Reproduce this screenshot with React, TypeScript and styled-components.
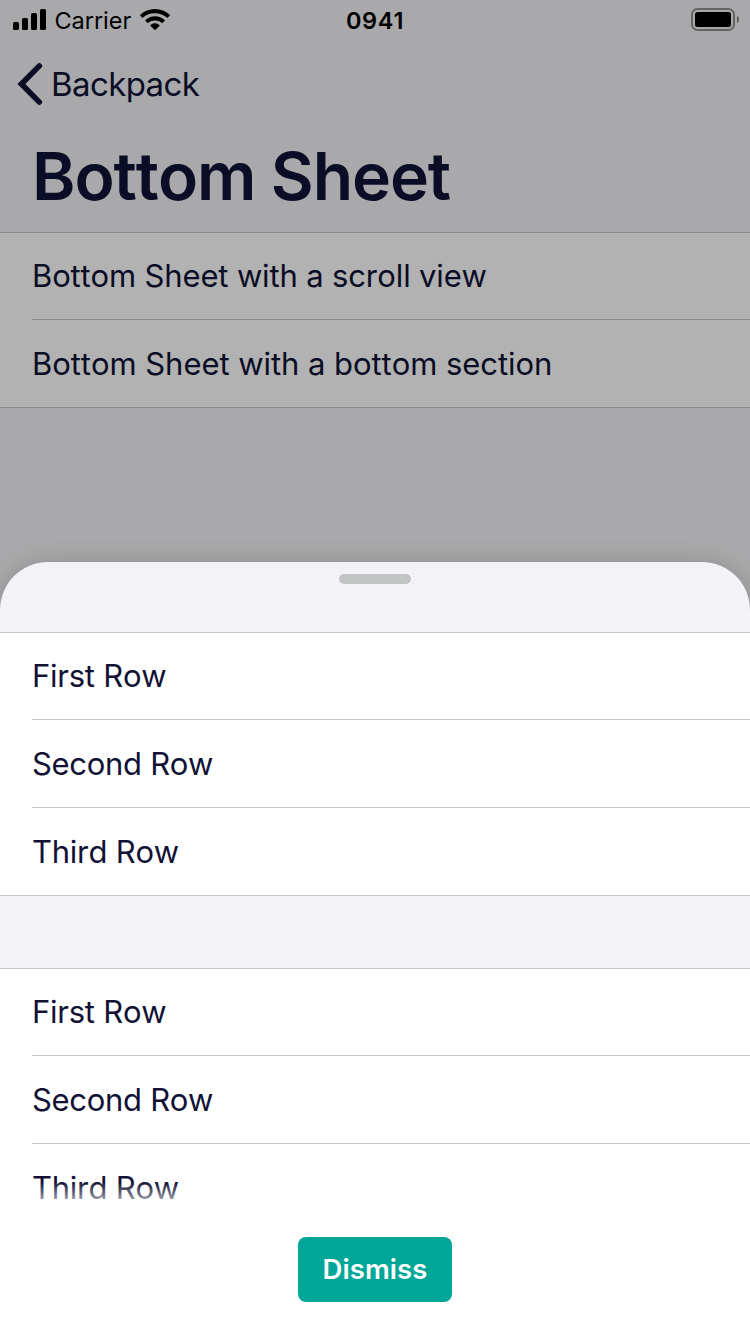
import React from "react";
import styled, { createGlobalStyle } from "styled-components";

const GlobalStyle = createGlobalStyle`
  * { box-sizing: border-box; }
  body { margin: 0; background: #f2f2f7; }
`;

const Screen = styled.div`
  position: relative;
  width: 750px;
  height: 1334px;
  overflow: hidden;
  background: #f2f2f5;
  color: #111236;
  font-family: Inter, "Liberation Sans", sans-serif;
`;

const StatusBar = styled.div`
  display: grid;
  grid-template-columns: 1fr auto 1fr;
  align-items: center;
  height: 40px;
  padding: 0 11px 0 13px;
  color: #000;
  font-size: 23.5px;
  line-height: 40px;
`;

const StatusLeft = styled.div`
  display: flex;
  align-items: center;

  svg { margin-bottom: 2px; }
`;

const Carrier = styled.span`
  margin: 1px 9px 0 7.5px;
  letter-spacing: -0.05px;
`;

const Clock = styled.span`
  padding-top: 1px;
  font-weight: 600;
  letter-spacing: 0.7px;
  margin-right: 2px;
`;

const StatusRight = styled.div`
  display: flex;
  justify-content: flex-end;
  padding-bottom: 2px;
`;

const NavBar = styled.nav`
  display: flex;
  align-items: center;
  height: 88px;
  padding-left: 15.5px;
`;

const BackLabel = styled.span`
  margin-left: 7.5px;
  font-size: 33px;
  line-height: 40px;
  letter-spacing: -0.6px;
`;

const Title = styled.h1`
  height: 104px;
  margin: 0;
  padding: 8px 32px 0;
  font-size: 66px;
  font-weight: 600;
  line-height: 80px;
  letter-spacing: -1.1px;
  font-kerning: none;
`;

const Group = styled.div<{ $gap?: number }>`
  margin-top: ${({ $gap = 0 }) => $gap}px;
  border-top: 1px solid #c6c5c9;
  background: #fff;
  border-bottom: 1px solid #c6c5c9;
`;

const Row = styled.div`
  height: 88px;
  padding-left: 32px;
  background: #fff;

  &:first-child,
  &:last-child { height: 87px; }
`;

const RowLabel = styled.div<{ $tracking: number }>`
  height: 100%;
  border-bottom: 1px solid #c6c5c9;
  font-size: 31px;
  line-height: 87px;
  letter-spacing: ${({ $tracking }) => $tracking}px;
  font-kerning: none;
  white-space: nowrap;

  ${Row}:first-child & { line-height: 86px; }
  ${Row}:last-child & { border-bottom: 0; }
`;

const Backdrop = styled.div`
  position: absolute;
  inset: 0;
  background: rgba(0, 0, 0, 0.3);
`;

const Sheet = styled.section`
  position: absolute;
  left: 0;
  right: 0;
  bottom: 0;
  display: flex;
  flex-direction: column;
  height: 772px;
  overflow: hidden;
  border-radius: 48px 48px 0 0;
  background: #f3f2f7;
  box-shadow: 0 0 24px rgba(0, 0, 0, 0.16);
`;

const GripArea = styled.div`
  display: flex;
  flex: none;
  justify-content: center;
  height: 70px;
  padding-top: 12px;
`;

const Grip = styled.div`
  width: 72px;
  height: 10px;
  border-radius: 5px;
  background: #c2c3c3;
`;

const SheetContent = styled.div`
  position: relative;
  flex: 1;
  min-height: 0;
  overflow: hidden;
`;

const Fade = styled.div`
  position: absolute;
  left: 0;
  right: 0;
  bottom: 0;
  height: 17px;
  background: linear-gradient(rgba(255, 255, 255, 0), rgba(255, 255, 255, 0.55));
`;

const Footer = styled.footer`
  display: flex;
  flex: none;
  align-items: flex-start;
  justify-content: center;
  height: 135px;
  padding-top: 38px;
  background: #fff;
`;

const Button = styled.button`
  width: 154px;
  height: 65px;
  padding: 0;
  border: 0;
  border-radius: 8px;
  background: #00a698;
  color: #fff;
  font: 600 27.5px/65px Inter, "Liberation Sans", sans-serif;
  letter-spacing: 0.1px;
`;

const SignalIcon = () => (
  <svg width="34" height="22" viewBox="0 0 34 22">
    <rect x="0" y="13" width="6" height="8" rx="1.6" />
    <rect x="9" y="9" width="6" height="12" rx="1.6" />
    <rect x="18" y="4" width="6" height="17" rx="1.6" />
    <rect x="27" y="0" width="6" height="21" rx="1.6" />
  </svg>
);

const WifiIcon = () => (
  <svg width="30" height="22" viewBox="0 0 30 22">
    <path d="M15 0C9.300 0 4.200 2.200.4 5.800a.7.7 0 0 0 0 1l1.700 1.700a.7.7 0 0 0 1 0A17.300 17.300 0 0 1 15 4.300c4.600 0 8.700 1.600 11.900 4.200a.7.7 0 0 0 1 0l1.700-1.700a.7.7 0 0 0 0-1C25.800 2.200 20.700 0 15 0Z" />
    <path d="M15 7.200c-3.700 0-7 1.400-9.500 3.700a.7.7 0 0 0 0 1l1.800 1.800a.7.7 0 0 0 1 0A10 10 0 0 1 15 11.400a10 10 0 0 1 6.700 2.300.7.7 0 0 0 1 0l1.800-1.800a.7.7 0 0 0 0-1A14 14 0 0 0 15 7.200Z" />
    <path d="M15 14.300c-1.700 0-3.200.6-4.400 1.600a.7.7 0 0 0 0 1l3.900 3.900a.7.7 0 0 0 1 0l3.900-3.900a.7.7 0 0 0 0-1A6.900 6.900 0 0 0 15 14.300Z" />
  </svg>
);

const BatteryIcon = () => (
  <svg width="48" height="23" viewBox="0 0 48 23">
    <rect x="1" y="1" width="42" height="21" rx="5.500" fill="none" stroke="#000" strokeOpacity="0.4" strokeWidth="2" />
    <rect x="4" y="4" width="36" height="15" rx="2.500" />
    <path d="M46 8c1.300.6 2 1.900 2 3.500s-.7 2.900-2 3.500Z" fillOpacity="0.45" />
  </svg>
);

const BackIcon = () => (
  <svg width="28" height="44" viewBox="0 0 28 44" fill="none" stroke="#111236" strokeWidth="5.6" strokeLinecap="round" strokeLinejoin="miter">
    <path d="M23.300 3.900 5.400 22l17.900 18.100" />
  </svg>
);

type Item = { label: string; tracking: number };

const List = ({ items, gap }: { items: Item[]; gap?: number }) => (
  <Group $gap={gap}>
    {items.map(({ label, tracking }) => (
      <Row key={label}>
        <RowLabel $tracking={tracking}>{label}</RowLabel>
      </Row>
    ))}
  </Group>
);

const pageRows: Item[] = [
  { label: "Bottom Sheet with a scroll view", tracking: -0.15 },
  { label: "Bottom Sheet with a bottom section", tracking: -0.05 },
];

const sheetRows: Item[] = [
  { label: "First Row", tracking: -0.25 },
  { label: "Second Row", tracking: -0.3 },
  { label: "Third Row", tracking: -0.25 },
];

export default function App() {
  return (
    <Screen>
      <GlobalStyle />
      <StatusBar>
        <StatusLeft>
          <SignalIcon />
          <Carrier>Carrier</Carrier>
          <WifiIcon />
        </StatusLeft>
        <Clock>0941</Clock>
        <StatusRight>
          <BatteryIcon />
        </StatusRight>
      </StatusBar>
      <NavBar>
        <BackIcon />
        <BackLabel>Backpack</BackLabel>
      </NavBar>
      <Title>Bottom Sheet</Title>
      <List items={pageRows} />
      <Backdrop />
      <Sheet>
        <GripArea>
          <Grip />
        </GripArea>
        <SheetContent>
          <List items={sheetRows} />
          <List items={sheetRows} gap={72} />
          <Fade />
        </SheetContent>
        <Footer>
          <Button>Dismiss</Button>
        </Footer>
      </Sheet>
    </Screen>
  );
}
